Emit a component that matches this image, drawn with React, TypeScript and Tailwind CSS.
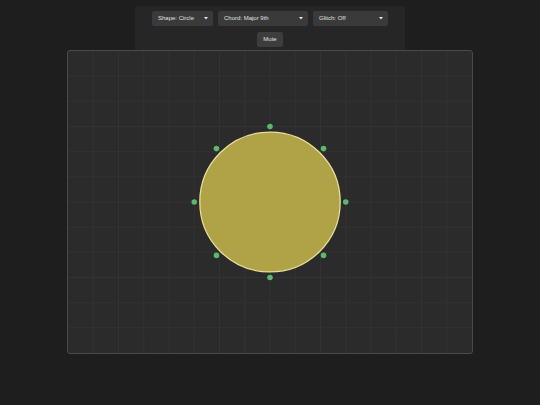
import React from "react";

const Caret = () => (
  <svg width="4" height="3" viewBox="0 0 4 3" className="shrink-0">
    <path d="M0 0 L4 0 L2 2.4 Z" fill="#e5e5e5" />
  </svg>
);

function Select({ label, w }: { label: string; w: string }) {
  return (
    <div
      className={`${w} h-[15px] rounded-[2px] bg-[#3a3a3a] flex items-center justify-between pl-[6px] pr-[5px] text-[6px] text-[#e0e0e0]`}
    >
      <span>{label}</span>
      <Caret />
    </div>
  );
}

export default function App() {
  const lines: React.ReactNode[] = [];
  for (let x = 50; x < 800; x += 50) {
    lines.push(<line key={"v" + x} x1={x} y1={0} x2={x} y2={600} stroke="#333333" strokeWidth={2} />);
  }
  for (let y = 50; y < 600; y += 50) {
    lines.push(<line key={"h" + y} x1={0} y1={y} x2={800} y2={y} stroke="#333333" strokeWidth={2} />);
  }
  const handles: React.ReactNode[] = [];
  for (let i = 0; i < 8; i++) {
    const a = (i * Math.PI) / 4;
    handles.push(
      <circle key={i} cx={400 + 150 * Math.cos(a)} cy={300 + 150 * Math.sin(a)} r={5.5} fill="#5cb86c" />
    );
  }
  return (
    <div
      className="w-[540px] h-[405px] bg-[#1e1e1e] flex flex-col items-center"
      style={{ fontFamily: '"Liberation Sans", Arial, sans-serif' }}
    >
      <div className="mt-[6px] w-[270px] h-[44px] bg-[#262626] rounded-t-[3px] flex flex-col items-center pt-[5px] gap-[6px] relative z-10">
        <div className="flex gap-[5px]">
          <Select label="Shape: Circle" w="w-[61px]" />
          <Select label="Chord: Major 9th" w="w-[90px]" />
          <Select label="Glitch: Off" w="w-[75px]" />
        </div>
        <div className="w-[26px] h-[15px] rounded-[2px] bg-[#3d3d3d] flex items-center justify-center text-[6px] text-[#e0e0e0]">
          Mute
        </div>
      </div>
      <div className="w-[406px] h-[304px] border border-[#4a4a4a] rounded-[3px] bg-[#2b2b2b] overflow-hidden">
        <svg viewBox="0 0 800 600" preserveAspectRatio="none" className="w-full h-full block">
          {lines}
          <circle cx={400} cy={300} r={139} fill="#b0a247" stroke="#e8e09a" strokeWidth={2.5} />
          {handles}
        </svg>
      </div>
    </div>
  );
}
